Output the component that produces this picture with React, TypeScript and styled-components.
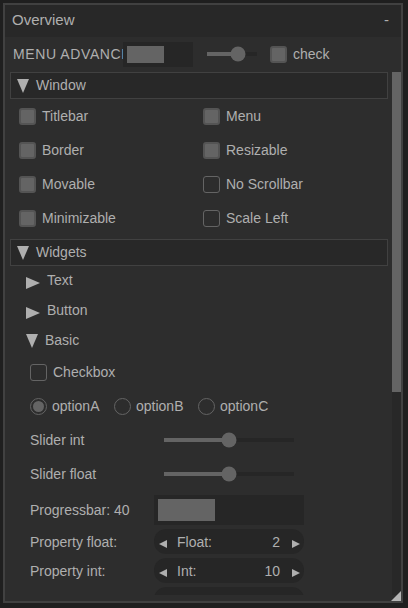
import styled, { createGlobalStyle } from "styled-components";

const GlobalStyle = createGlobalStyle`
  html, body {
    margin: 0;
    padding: 0;
    background: #1f1f1f;
  }
  body {
    font-family: "Liberation Sans", Arial, sans-serif;
    font-size: 14px;
    color: #afafaf;
  }
`;

const Page = styled.div`
  padding: 3px;
`;

const Window = styled.div`
  position: relative;
  box-sizing: border-box;
  width: 400px;
  height: 600px;
  border: 2px solid #414141;
  background: #2d2d2d;
  display: flex;
  flex-direction: column;
  overflow: hidden;
`;

const Header = styled.div`
  height: 32px;
  flex: none;
  box-sizing: border-box;
  background: #282828;
  display: flex;
  align-items: center;
  justify-content: space-between;
  padding: 0 12px 4px 7px;
  font-size: 15px;
`;

const MenuBar = styled.div`
  height: 35px;
  flex: none;
  box-sizing: border-box;
  display: flex;
  align-items: center;
  padding: 0 0 1px 8px;
`;

const MenuLabel = styled.div`
  width: 110px;
  overflow: hidden;
  white-space: nowrap;
  letter-spacing: 0.6px;
`;

const ScrollArea = styled.div`
  flex: 1;
  display: flex;
  margin-bottom: 6px;
  min-height: 0;
`;

const Content = styled.div`
  flex: 1;
  overflow: hidden;
  padding: 0 4px 0 5px;
`;

const Scrollbar = styled.div`
  width: 9px;
  flex: none;
  background: #282828;
`;

const Thumb = styled.div`
  height: 320px;
  background: #646464;
`;

const Tab = styled.div<{ $top?: number }>`
  box-sizing: border-box;
  height: 27px;
  margin-top: ${(p) => p.$top ?? 0}px;
  border: 1px solid #414141;
  background: #282828;
  display: flex;
  align-items: center;
  padding: 0 0 1px 6px;
  gap: 7px;
`;

const Down = styled.span`
  width: 0;
  height: 0;
  border-left: 6.5px solid transparent;
  border-right: 6.5px solid transparent;
  border-top: 14px solid #afafaf;
  margin-top: 2px;
`;

const Right = styled.span`
  width: 0;
  height: 0;
  border-top: 6.5px solid transparent;
  border-bottom: 6.5px solid transparent;
  border-left: 14px solid #afafaf;
  margin-top: 5px;
`;

const FlagGrid = styled.div`
  display: grid;
  grid-template-columns: 184px 1fr;
  grid-auto-rows: 30px;
  row-gap: 4px;
  padding-left: 9px;
  margin-top: 2px;
`;

const Toggle = styled.label`
  display: flex;
  align-items: center;
  gap: 6px;
  white-space: nowrap;
`;

const Box = styled.span<{ $on?: boolean }>`
  box-sizing: border-box;
  width: 17px;
  height: 17px;
  flex: none;
  border-radius: 3px;
  border: ${(p) => (p.$on ? "2px solid #545454" : "1px solid #646464")};
  background: ${(p) => (p.$on ? "#646464" : "transparent")};
`;

const TreeNode = styled.div<{ $top?: number }>`
  height: 26px;
  margin-top: ${(p) => p.$top ?? 4}px;
  display: flex;
  align-items: center;
  gap: 7px;
  padding-left: 16px;
`;

const Basic = styled.div`
  padding-left: 20px;
  display: flex;
  flex-direction: column;
  gap: 4px;
  margin-top: 4px;
`;

const Row = styled.div<{ $h?: number; $top?: number }>`
  height: ${(p) => p.$h ?? 30}px;
  margin-top: ${(p) => p.$top ?? 0}px;
  display: flex;
  align-items: center;
  flex: none;
`;

const RowLabel = styled.div`
  width: 124px;
  flex: none;
  white-space: nowrap;
`;

const Option = styled.label`
  width: 84px;
  display: flex;
  align-items: center;
  gap: 5px;
`;

const Radio = styled.span<{ $on?: boolean }>`
  box-sizing: border-box;
  width: 17px;
  height: 17px;
  border-radius: 50%;
  border: 1px solid #646464;
  display: flex;
  align-items: center;
  justify-content: center;
  &::after {
    content: "";
    width: 11px;
    height: 11px;
    border-radius: 50%;
    background: ${(p) => (p.$on ? "#646464" : "transparent")};
  }
`;

const SliderBox = styled.div<{ $w: number; $pad?: number }>`
  width: ${(p) => p.$w}px;
  padding: 0 ${(p) => p.$pad ?? 0}px;
  box-sizing: border-box;
  height: 20px;
  display: flex;
  align-items: center;
  flex: none;
`;

const Track = styled.div`
  position: relative;
  flex: 1;
  height: 4px;
  background: #262626;
`;

const Fill = styled.div`
  height: 100%;
  background: #646464;
`;

const Knob = styled.div`
  position: absolute;
  top: 50%;
  width: 15px;
  height: 15px;
  border-radius: 50%;
  background: #646464;
  transform: translate(-50%, -50%);
`;

const Progress = styled.div<{ $w: number; $h: number }>`
  box-sizing: border-box;
  width: ${(p) => p.$w}px;
  height: ${(p) => p.$h}px;
  padding: 4px;
  background: #262626;
  flex: none;
`;

const ProgressFill = styled.div`
  height: 100%;
  background: #646464;
`;

const Property = styled.div`
  box-sizing: border-box;
  width: 150px;
  height: 25px;
  border-radius: 12px;
  background: #262626;
  display: flex;
  align-items: center;
  padding: 0 4px;
`;

const ArrowL = styled.span`
  width: 0;
  height: 0;
  border-top: 4px solid transparent;
  border-bottom: 4px solid transparent;
  border-right: 8px solid #afafaf;
  margin: 4px 10px 0 1px;
`;

const ArrowR = styled.span`
  width: 0;
  height: 0;
  border-top: 4px solid transparent;
  border-bottom: 4px solid transparent;
  border-left: 8px solid #afafaf;
  margin: 4px 0 0 12px;
`;

const PropName = styled.span`
  flex: 1;
`;

const Grip = styled.div`
  position: absolute;
  right: 0;
  bottom: 0;
  width: 0;
  height: 0;
  border-left: 10px solid transparent;
  border-bottom: 10px solid #b4b4b4;
`;

function Check(props: { on?: boolean; label: string }) {
  return (
    <Toggle>
      <Box $on={props.on} />
      {props.label}
    </Toggle>
  );
}

function Slider(props: { w: number; pad?: number; value: number }) {
  return (
    <SliderBox $w={props.w} $pad={props.pad}>
      <Track>
        <Fill style={{ width: `${props.value * 100}%` }} />
        <Knob style={{ left: `${props.value * 100}%` }} />
      </Track>
    </SliderBox>
  );
}

function Prop(props: { name: string; value: string }) {
  return (
    <Property>
      <ArrowL />
      <PropName>{props.name}</PropName>
      {props.value}
      <ArrowR />
    </Property>
  );
}

const flags = [
  ["Titlebar", true, "Menu", true],
  ["Border", true, "Resizable", true],
  ["Movable", true, "No Scrollbar", false],
  ["Minimizable", true, "Scale Left", false],
] as const;

export default function App() {
  return (
    <Page>
      <GlobalStyle />
      <Window>
        <Header>
          <span>Overview</span>
          <span>-</span>
        </Header>
        <MenuBar>
          <MenuLabel>MENU ADVANCED</MenuLabel>
          <Progress $w={70} $h={25}>
            <ProgressFill style={{ width: "60%" }} />
          </Progress>
          <div style={{ marginLeft: 14 }}>
            <Slider w={50} value={0.62} />
          </div>
          <div style={{ marginLeft: 13 }}>
            <Check on label="check" />
          </div>
        </MenuBar>
        <ScrollArea>
          <Content>
            <Tab>
              <Down />
              Window
            </Tab>
            <FlagGrid>
              {flags.map(([a, aOn, b, bOn]) => [
                <Check key={a} on={aOn} label={a} />,
                <Check key={b} on={bOn} label={b} />,
              ])}
            </FlagGrid>
            <Tab $top={6}>
              <Down />
              Widgets
            </Tab>
            <TreeNode $top={1}>
              <Right />
              Text
            </TreeNode>
            <TreeNode>
              <Right />
              Button
            </TreeNode>
            <TreeNode>
              <Down />
              Basic
            </TreeNode>
            <Basic>
              <Row>
                <Check label="Checkbox" />
              </Row>
              <Row>
                <Option>
                  <Radio $on />
                  optionA
                </Option>
                <Option>
                  <Radio />
                  optionB
                </Option>
                <Option>
                  <Radio />
                  optionC
                </Option>
              </Row>
              <Row>
                <RowLabel>Slider int</RowLabel>
                <Slider w={150} pad={10} value={0.5} />
              </Row>
              <Row>
                <RowLabel>Slider float</RowLabel>
                <Slider w={150} pad={10} value={0.5} />
              </Row>
              <Row $top={2}>
                <RowLabel>Progressbar: 40</RowLabel>
                <Progress $w={150} $h={30}>
                  <ProgressFill style={{ width: "40%" }} />
                </Progress>
              </Row>
              <Row $h={25}>
                <RowLabel>Property float:</RowLabel>
                <Prop name="Float:" value="2" />
              </Row>
              <Row $h={25}>
                <RowLabel>Property int:</RowLabel>
                <Prop name="Int:" value="10" />
              </Row>
              <Row $h={25}>
                <RowLabel>Property neg:</RowLabel>
                <Prop name="Neg:" value="10" />
              </Row>
            </Basic>
          </Content>
          <Scrollbar>
            <Thumb />
          </Scrollbar>
        </ScrollArea>
        <Grip />
      </Window>
    </Page>
  );
}
